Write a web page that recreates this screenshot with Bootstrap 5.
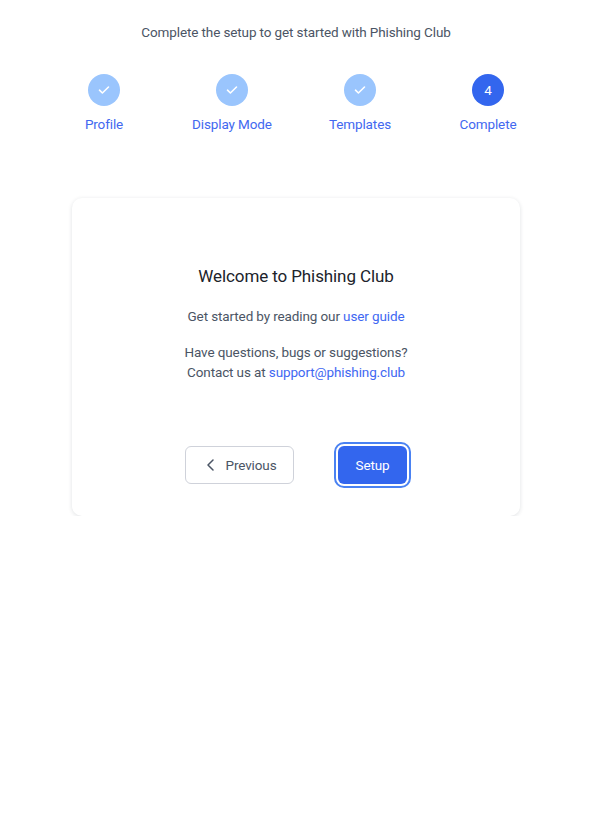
<!DOCTYPE html>
<html lang="en">
<head>
<meta charset="utf-8">
<title>Setup</title>
<link href="https://cdn.jsdelivr.net/npm/bootstrap@5.3.0/dist/css/bootstrap.min.css" rel="stylesheet">
<style>
body{font-family:Roboto,"Liberation Sans",sans-serif;background:#fff;color:#4b5565;font-size:13.5px;letter-spacing:-.12px;padding-left:2px;}
.intro-line{height:18px;line-height:18px;margin-top:23px;color:#4b5565;}
.step-row{width:512px;margin:33px auto 0;}
.step-item{width:128px;}
.step-dot{width:32px;height:32px;font-size:13.5px;color:#fff;background:#9ac5fd;}
.step-dot.now{background:#3366ee;}
.step-name{margin-top:8px;height:20px;line-height:20px;color:#4268f0;}
.setup-box{width:448px;height:318px;margin:64px auto 0;padding:67px 0 0;border-radius:10px;box-shadow:0 1px 4px rgba(30,40,60,.14);}
.setup-box h1{font-size:17px;line-height:22px;letter-spacing:-.1px;color:#20232b;font-weight:400;margin:0 0 19px;}
.setup-box p{line-height:20px;margin:0 0 16px;color:#4b5565;}
.setup-box a{color:#3f68f2;text-decoration:none;}
.act-row{margin-top:64px;gap:44px;}
.act-back{width:109px;height:38px;border:1px solid #cfd2da;border-radius:6px;color:#4b5565;font-size:13.5px;letter-spacing:-.12px;background:#fff;padding:0 0 0 4px;gap:11px;}
.act-go{width:69px;height:38px;border-radius:6px;background:#3366ee;color:#fff;font-size:13.5px;letter-spacing:-.12px;border:0;padding:0;outline:2px solid #4a82f2;outline-offset:2px;}
.act-go:hover{background:#3366ee;color:#fff;}
</style>
</head>
<body>
<div class="intro-line text-center">Complete the setup to get started with Phishing Club</div>
<div class="step-row d-flex">
  <div class="step-item d-flex flex-column align-items-center">
    <div class="step-dot rounded-circle d-flex align-items-center justify-content-center"><svg width="12" height="10" viewBox="0 0 12 10" fill="none" stroke="#fff" stroke-width="1.6" stroke-linecap="round" stroke-linejoin="round"><path d="M1.5 5.2 4.4 8 10.5 2"/></svg></div>
    <div class="step-name">Profile</div>
  </div>
  <div class="step-item d-flex flex-column align-items-center">
    <div class="step-dot rounded-circle d-flex align-items-center justify-content-center"><svg width="12" height="10" viewBox="0 0 12 10" fill="none" stroke="#fff" stroke-width="1.6" stroke-linecap="round" stroke-linejoin="round"><path d="M1.5 5.2 4.4 8 10.5 2"/></svg></div>
    <div class="step-name">Display Mode</div>
  </div>
  <div class="step-item d-flex flex-column align-items-center">
    <div class="step-dot rounded-circle d-flex align-items-center justify-content-center"><svg width="12" height="10" viewBox="0 0 12 10" fill="none" stroke="#fff" stroke-width="1.6" stroke-linecap="round" stroke-linejoin="round"><path d="M1.5 5.2 4.4 8 10.5 2"/></svg></div>
    <div class="step-name">Templates</div>
  </div>
  <div class="step-item d-flex flex-column align-items-center">
    <div class="step-dot now rounded-circle d-flex align-items-center justify-content-center">4</div>
    <div class="step-name">Complete</div>
  </div>
</div>
<div class="setup-box bg-white text-center">
  <h1>Welcome to Phishing Club</h1>
  <p>Get started by reading our <a href="#">user guide</a></p>
  <p>Have questions, bugs or suggestions?<br>Contact us at <a href="#">support@phishing.club</a></p>
  <div class="act-row d-flex justify-content-center">
    <button type="button" class="btn act-back d-flex align-items-center justify-content-center"><svg width="8" height="12" viewBox="0 0 8 12" fill="none" stroke="#4b5565" stroke-width="1.5" stroke-linecap="round" stroke-linejoin="round"><path d="M7 1 2 6l5 5"/></svg><span>Previous</span></button>
    <button type="button" class="btn act-go">Setup</button>
  </div>
</div>
<script src="https://cdn.jsdelivr.net/npm/bootstrap@5.3.0/dist/js/bootstrap.bundle.min.js"></script>
</body>
</html>
